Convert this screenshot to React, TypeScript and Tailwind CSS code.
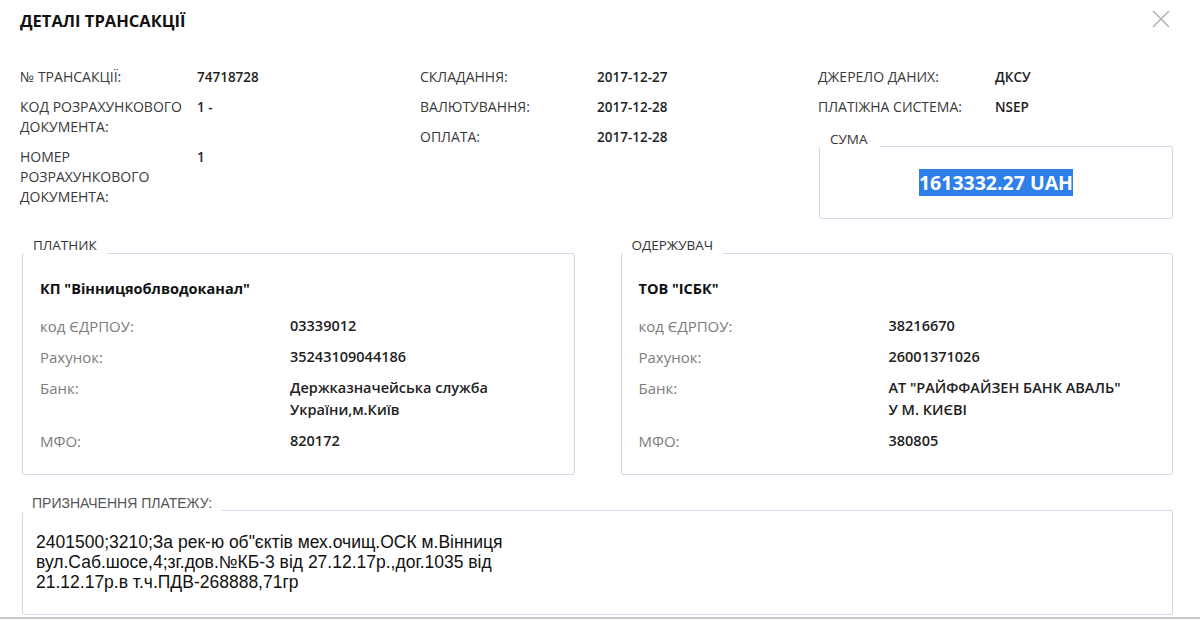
const sans = "font-['Open_Sans',_'Noto_Sans',_sans-serif]";

const infoColumns: { label: React.ReactNode; value: string }[][] = [
  [
    { label: '№ ТРАНСАКЦІЇ:', value: '74718728' },
    { label: <>КОД РОЗРАХУНКОВОГО<br />ДОКУМЕНТА:</>, value: '1 -' },
    { label: <>НОМЕР<br />РОЗРАХУНКОВОГО<br />ДОКУМЕНТА:</>, value: '1' },
  ],
  [
    { label: 'СКЛАДАННЯ:', value: '2017-12-27' },
    { label: 'ВАЛЮТУВАННЯ:', value: '2017-12-28' },
    { label: 'ОПЛАТА:', value: '2017-12-28' },
  ],
  [
    { label: 'ДЖЕРЕЛО ДАНИХ:', value: 'ДКСУ' },
    { label: 'ПЛАТІЖНА СИСТЕМА:', value: 'NSEP' },
  ],
];

interface Party {
  title: string;
  name: string;
  code: string;
  account: string;
  bank: React.ReactNode;
  mfo: string;
}

const parties: Party[] = [
  {
    title: 'ПЛАТНИК',
    name: 'КП "Вінницяоблводоканал"',
    code: '03339012',
    account: '35243109044186',
    bank: <>Держказначейська служба<br />України,м.Київ</>,
    mfo: '820172',
  },
  {
    title: 'ОДЕРЖУВАЧ',
    name: 'ТОВ "ІСБК"',
    code: '38216670',
    account: '26001371026',
    bank: <>АТ "РАЙФФАЙЗЕН БАНК АВАЛЬ"<br />У М. КИЄВІ</>,
    mfo: '380805',
  },
];

const boxBorder = 'rounded-[3px] border border-[#d6d6ee] border-x-[#d8d8d8] min-w-0';

function InfoRow({ label, value }: { label: React.ReactNode; value: string }) {
  return (
    <div className="flex leading-[20px]">
      <div className="w-[177px] shrink-0 text-[14px] text-[#3a3a3a]">{label}</div>
      <div className="text-[13.5px] font-semibold text-[#1e1e1e]">{value}</div>
    </div>
  );
}

function PartyRow({ label, children }: { label: string; children: React.ReactNode }) {
  return (
    <div className="flex leading-[22px]">
      <div className="w-[250px] shrink-0 text-[15px] text-[#7d7d7d]">{label}</div>
      <div className="text-[14.5px] font-semibold text-[#222]">{children}</div>
    </div>
  );
}

function PartyBox({ party }: { party: Party }) {
  return (
    <fieldset className={boxBorder}>
      <legend className="ml-[1px] pl-[9px] pr-[10px] pb-[16px] text-[13.5px] leading-[20px] text-[#333]">
        {party.title}
      </legend>
      <div className="flex flex-col gap-[9px] px-[17px] pt-[7px] pb-[22px]">
        <div className="mb-[6px] text-[14.5px] font-bold leading-[22px] text-[#111]">{party.name}</div>
        <PartyRow label="код ЄДРПОУ:">{party.code}</PartyRow>
        <PartyRow label="Рахунок:">{party.account}</PartyRow>
        <PartyRow label="Банк:">{party.bank}</PartyRow>
        <PartyRow label="МФО:">{party.mfo}</PartyRow>
      </div>
    </fieldset>
  );
}

function CloseIcon() {
  return (
    <svg width="20" height="20" viewBox="0 0 20 20" className="text-[#b4b4b4]">
      <path d="M2 2 L18 18 M18 2 L2 18" stroke="currentColor" strokeWidth="1.6" fill="none" />
    </svg>
  );
}

export default function App() {
  return (
    <div className={`${sans} h-[621px] w-[1200px] overflow-hidden bg-white`}>
      <div className="flex items-start justify-between pl-5 pr-[20px] pt-[11px]">
        <h1 className="text-[16.5px] font-bold leading-[20px] text-[#111]">ДЕТАЛІ ТРАНСАКЦІЇ</h1>
        <button className="-mt-[2px] mr-[9px]" aria-label="close">
          <CloseIcon />
        </button>
      </div>

      <div className="mt-[36px] grid grid-cols-[400px_398px_1fr] pl-5 pr-[27px]">
        <div className="flex flex-col gap-[10px]">
          {infoColumns[0].map((r, i) => (
            <InfoRow key={i} label={r.label} value={r.value} />
          ))}
        </div>
        <div className="flex flex-col gap-[10px]">
          {infoColumns[1].map((r, i) => (
            <InfoRow key={i} label={r.label} value={r.value} />
          ))}
        </div>
        <div className="flex flex-col gap-[10px]">
          {infoColumns[2].map((r, i) => (
            <InfoRow key={i} label={r.label} value={r.value} />
          ))}
          <fieldset className={`${boxBorder} mt-[2px] ml-[1px]`}>
            <legend className="pl-[10px] pr-[12px] pb-[14px] text-[13.5px] leading-[20px] text-[#333]">СУМА</legend>
            <div className="pt-[7px] pb-[22px] text-center">
              <span className="bg-[#2f7fea] text-[19.5px] font-bold leading-[26px] text-white">1613332.27 UAH</span>
            </div>
          </fieldset>
        </div>
      </div>

      <div className="mt-[16px] pl-[22px] pr-[27px]">
        <div className="grid grid-cols-2 gap-[46px]">
          {parties.map((p) => (
            <PartyBox key={p.title} party={p} />
          ))}
        </div>

        <fieldset className={`${boxBorder} mt-[20px]`}>
          <legend className="pl-[9px] pr-[10px] pb-[14px] font-['Liberation_Sans',_Arial,_sans-serif] text-[14px] leading-[16px] text-[#555]">
            ПРИЗНАЧЕННЯ ПЛАТЕЖУ:
          </legend>
          <p className="px-[13px] pt-[7px] pb-[22px] font-['Liberation_Sans',_Arial,_sans-serif] text-[17.5px] leading-[20px] text-[#111]">
            2401500;3210;За рек-ю об"єктів мех.очищ.ОСК м.Вінниця
            <br />
            вул.Саб.шосе,4;зг.дов.№КБ-3 від 27.12.17р.,дог.1035 від
            <br />
            21.12.17р.в т.ч.ПДВ-268888,71гр
          </p>
        </fieldset>
      </div>

      <div className="mt-[2px] h-[2px] bg-[#c9c9c9]" />
    </div>
  );
}
